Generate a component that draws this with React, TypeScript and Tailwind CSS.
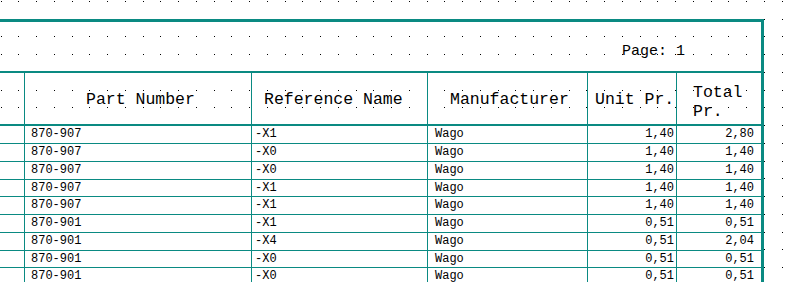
import React from "react";

const rows: string[][] = [
  ["870-907", "-X1", "Wago", "1,40", "2,80"],
  ["870-907", "-X0", "Wago", "1,40", "1,40"],
  ["870-907", "-X0", "Wago", "1,40", "1,40"],
  ["870-907", "-X1", "Wago", "1,40", "1,40"],
  ["870-907", "-X1", "Wago", "1,40", "1,40"],
  ["870-901", "-X1", "Wago", "0,51", "0,51"],
  ["870-901", "-X4", "Wago", "0,51", "2,04"],
  ["870-901", "-X0", "Wago", "0,51", "0,51"],
  ["870-901", "-X0", "Wago", "0,51", "0,51"],
];

// row heights follow the drawing grid (17.75px), incl. the 1px bottom line
const rowHeights = [18, 18, 18, 17, 18, 18, 18, 17, 18];

const cols = "grid grid-cols-[25px_227px_176px_160px_89px_84px]";

function DotGrid() {
  const dots: React.ReactElement[] = [];
  for (let i = 0; i < 45; i++) {
    for (let j = 0; j < 16; j++) {
      const x = Math.round(0.5 + 17.75 * i);
      const y = Math.round(0.8 + 17.75 * j);
      dots.push(<rect key={`${i}-${j}`} x={x} y={y} width={1} height={1} fill="#000" />);
    }
  }
  return (
    <svg className="absolute inset-0" width={789} height={282} shapeRendering="crispEdges">
      {dots}
    </svg>
  );
}

export default function App() {
  return (
    <div className="relative w-[789px] h-[282px] overflow-hidden bg-white font-['Liberation_Mono',monospace] text-black">
      <DotGrid />
      <div className="relative mt-[19px] w-[764px] border-t-[3px] border-r-[3px] border-[#0a8a82]">
        <div className="h-[51px] border-b-2 border-[#0a8a82] pl-[622px] pt-[21px] text-[15px] leading-[18px]">
          Page: 1
        </div>

        <div className={`${cols} h-[53px] border-b-2 border-[#0a8a82] text-[16.5px] leading-[19px]`}>
          <div className="border-r border-[#0a8a82]" />
          <div className="flex items-center border-r border-[#0a8a82] pl-[61px] pt-[2px]">Part Number</div>
          <div className="flex items-center border-r border-[#0a8a82] pl-[12px] pt-[2px]">Reference Name</div>
          <div className="flex items-center border-r border-[#0a8a82] pl-[22px] pt-[2px]">Manufacturer</div>
          <div className="flex items-center border-r border-[#0a8a82] pl-[7px] pt-[2px] whitespace-nowrap">Unit Pr.</div>
          <div className="flex items-center pl-[16px] pt-[6px]">
            <span>
              Total
              <br />
              Pr.
            </span>
          </div>
        </div>

        {rows.map((r, idx) => (
          <div
            key={idx}
            className={`${cols} bg-white border-b border-[#0a8a82] text-[12px] leading-[17px]`}
            style={{ height: rowHeights[idx] }}
          >
            <div className="border-r border-[#0a8a82]" />
            <div className="flex items-center border-r border-[#0a8a82] pl-[6px]">{r[0]}</div>
            <div className="flex items-center border-r border-[#0a8a82] pl-[3px]">{r[1]}</div>
            <div className="flex items-center border-r border-[#0a8a82] pl-[7px]">{r[2]}</div>
            <div className="flex items-center justify-end border-r border-[#0a8a82] pr-[2px]">{r[3]}</div>
            <div className="flex items-center justify-end pr-[7px]">{r[4]}</div>
          </div>
        ))}
      </div>
    </div>
  );
}
